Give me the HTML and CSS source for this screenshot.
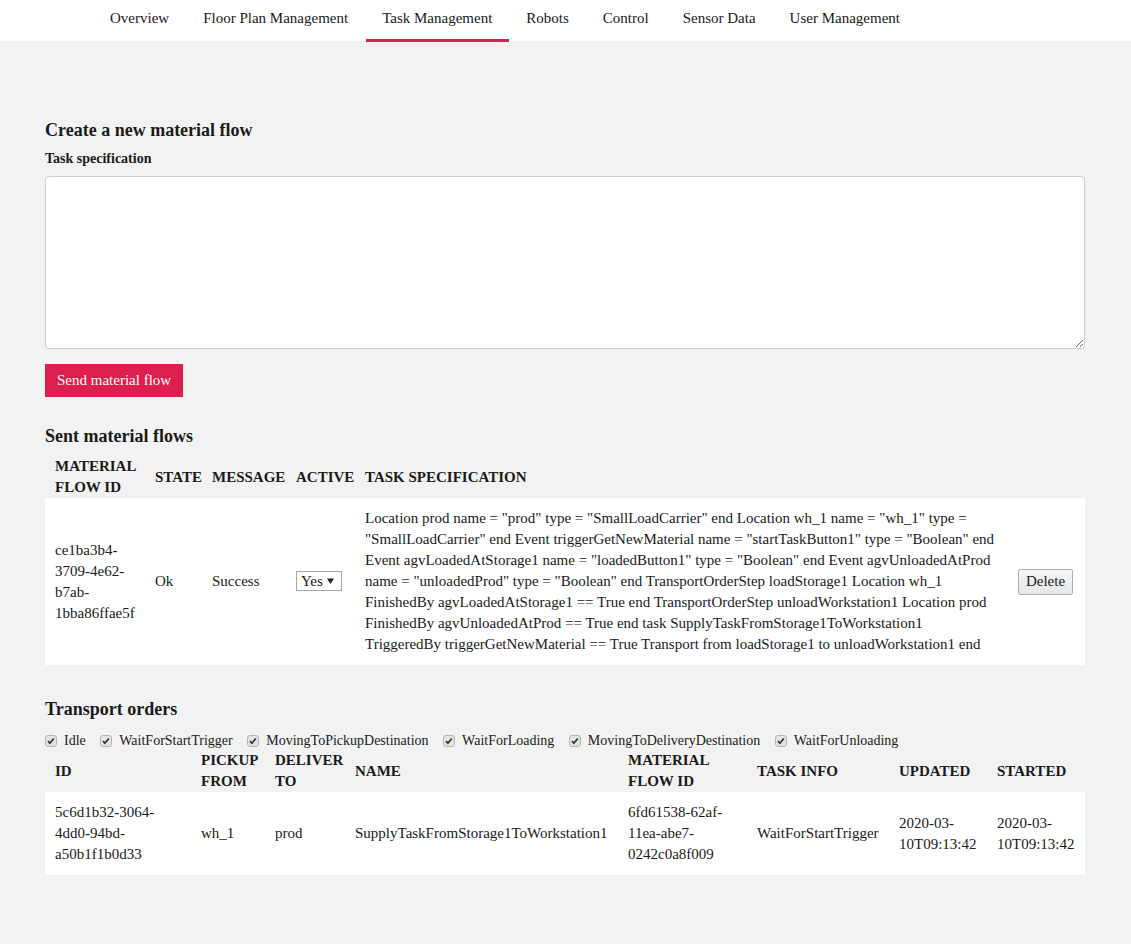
FILE: index.html
```html
<!DOCTYPE html>
<html lang="en">
<head>
<meta charset="utf-8">
<title>Task Management</title>
<link rel="stylesheet" href="styles.css">
</head>
<body>
<nav class="topnav">
  <a class="nav-item">Overview</a>
  <a class="nav-item">Floor Plan Management</a>
  <a class="nav-item active">Task Management</a>
  <a class="nav-item">Robots</a>
  <a class="nav-item">Control</a>
  <a class="nav-item">Sensor Data</a>
  <a class="nav-item">User Management</a>
</nav>
<main class="content">
  <h2 class="section-title first">Create a new material flow</h2>
  <label class="field-label" for="spec">Task specification</label>
  <textarea id="spec" class="spec-input"></textarea>
  <button class="primary-btn">Send material flow</button>

  <h2 class="section-title sent">Sent material flows</h2>
  <table class="data-table flows">
    <colgroup>
      <col class="f-id"><col class="f-state"><col class="f-msg"><col class="f-active"><col class="f-spec"><col class="f-del">
    </colgroup>
    <thead>
      <tr>
        <th>Material flow ID</th>
        <th>State</th>
        <th>Message</th>
        <th>Active</th>
        <th>Task specification</th>
        <th></th>
      </tr>
    </thead>
    <tbody>
      <tr>
        <td>ce1ba3b4-3709-4e62-b7ab-1bba86ffae5f</td>
        <td>Ok</td>
        <td>Success</td>
        <td><select class="yes-select"><option>Yes</option><option>No</option></select></td>
        <td>Location prod name = "prod" type = "SmallLoadCarrier" end Location wh_1 name = "wh_1" type = "SmallLoadCarrier" end Event triggerGetNewMaterial name = "startTaskButton1" type = "Boolean" end Event agvLoadedAtStorage1 name = "loadedButton1" type = "Boolean" end Event agvUnloadedAtProd name = "unloadedProd" type = "Boolean" end TransportOrderStep loadStorage1 Location wh_1 FinishedBy agvLoadedAtStorage1 == True end TransportOrderStep unloadWorkstation1 Location prod FinishedBy agvUnloadedAtProd == True end task SupplyTaskFromStorage1ToWorkstation1 TriggeredBy triggerGetNewMaterial == True Transport from loadStorage1 to unloadWorkstation1 end</td>
        <td><button class="del-btn">Delete</button></td>
      </tr>
    </tbody>
  </table>

  <h2 class="section-title transport">Transport orders</h2>
  <div class="filters">
    <label class="filter"><input type="checkbox" class="chk" checked>Idle</label>
    <label class="filter"><input type="checkbox" class="chk" checked>WaitForStartTrigger</label>
    <label class="filter"><input type="checkbox" class="chk" checked>MovingToPickupDestination</label>
    <label class="filter"><input type="checkbox" class="chk" checked>WaitForLoading</label>
    <label class="filter"><input type="checkbox" class="chk" checked>MovingToDeliveryDestination</label>
    <label class="filter"><input type="checkbox" class="chk" checked>WaitForUnloading</label>
  </div>
  <table class="data-table orders">
    <colgroup>
      <col class="o-id"><col class="o-pick"><col class="o-del"><col class="o-name"><col class="o-mf"><col class="o-info"><col class="o-upd"><col class="o-start">
    </colgroup>
    <thead>
      <tr>
        <th>ID</th>
        <th>Pickup from</th>
        <th>Deliver to</th>
        <th>Name</th>
        <th>Material flow ID</th>
        <th>Task info</th>
        <th>Updated</th>
        <th>Started</th>
      </tr>
    </thead>
    <tbody>
      <tr>
        <td>5c6d1b32-3064-4dd0-94bd-a50b1f1b0d33</td>
        <td>wh_1</td>
        <td>prod</td>
        <td>SupplyTaskFromStorage1ToWorkstation1</td>
        <td>6fd61538-62af-11ea-abe7-0242c0a8f009</td>
        <td>WaitForStartTrigger</td>
        <td>2020-03-10T09:13:42</td>
        <td>2020-03-10T09:13:42</td>
      </tr>
    </tbody>
  </table>
</main>
</body>
</html>
```

FILE: styles.css
```css
* { box-sizing: border-box; }

html, body {
  margin: 0;
  padding: 0;
  background: #f2f2f2;
  color: #1a1a1a;
  font-family: "Liberation Serif", "Times New Roman", serif;
  font-size: 15px;
}

.topnav {
  background: #ffffff;
  height: 41px;
  display: flex;
  padding-left: 94px;
}

.nav-item {
  display: block;
  padding: 0 17px 0 16px;
  margin-right: 1px;
  height: 42px;
  line-height: 37px;
  font-size: 15px;
  color: #1a1a1a;
  border-bottom: 3px solid transparent;
  cursor: pointer;
}

.nav-item.active {
  border-bottom-color: #dc1f4e;
}

.content {
  padding: 0 46px 60px 45px;
}

.section-title {
  margin: 0;
  font-size: 18px;
  line-height: 22px;
  font-weight: bold;
}

.section-title.first { padding-top: 78px; }
.section-title.sent { margin-top: 28px; }
.section-title.transport { margin-top: 33px; }

.field-label {
  display: block;
  margin-top: 9px;
  font-size: 14px;
  line-height: 18px;
  font-weight: bold;
}

.spec-input {
  display: block;
  width: 100%;
  height: 173px;
  margin-top: 8px;
  background: #ffffff;
  border: 1px solid #cccccc;
  border-radius: 4px;
  font-family: inherit;
  font-size: 15px;
  padding: 6px 8px;
}

.primary-btn {
  display: block;
  margin-top: 15px;
  height: 33px;
  padding: 0 12px;
  background: #dc1f4e;
  color: #ffffff;
  border: none;
  border-radius: 0;
  font-family: inherit;
  font-size: 15px;
  cursor: pointer;
}

.data-table {
  width: 100%;
  border-collapse: collapse;
  table-layout: fixed;
}

.data-table th {
  text-align: left;
  text-transform: uppercase;
  font-size: 15px;
  font-weight: bold;
  line-height: 21px;
  padding: 0 10px;
  vertical-align: middle;
}

.data-table td {
  background: #ffffff;
  font-size: 15px;
  line-height: 21px;
  padding: 10px;
  vertical-align: middle;
}

.flows { margin-top: 9px; }

.f-id { width: 100px; }
.f-state { width: 57px; }
.f-msg { width: 84px; }
.f-active { width: 69px; }
.f-spec { width: 654px; }
.f-del { width: 76px; }

.o-id { width: 146px; }
.o-pick { width: 74px; }
.o-del { width: 80px; }
.o-name { width: 273px; }
.o-mf { width: 129px; }
.o-info { width: 142px; }
.o-upd { width: 98px; }
.o-start { width: 98px; }

.yes-select {
  -webkit-appearance: none;
  appearance: none;
  width: 46px;
  height: 20px;
  padding: 0 0 0 4px;
  border: 1px solid #a6a6a6;
  border-radius: 0;
  background: #ffffff url("data:image/svg+xml;utf8,<svg xmlns='http://www.w3.org/2000/svg' width='7' height='6'><path d='M0 0.5h7L3.5 6z' fill='%23222'/></svg>") no-repeat right 7px center;
  font-family: inherit;
  font-size: 15px;
  line-height: 18px;
  color: #1a1a1a;
}

.del-btn {
  height: 26px;
  width: 55px;
  padding: 0;
  margin-left: -1px;
  background: linear-gradient(#f6f6f6, #e6e6e6);
  border: 1px solid #acacac;
  border-radius: 2px;
  font-family: inherit;
  font-size: 15px;
  color: #1a1a1a;
}

.filters {
  display: flex;
  gap: 14.5px;
  margin-top: 11px;
  height: 19px;
  align-items: center;
}

.filter {
  display: flex;
  align-items: center;
  font-size: 14px;
  line-height: 19px;
}

.chk {
  -webkit-appearance: none;
  appearance: none;
  width: 12px;
  height: 12px;
  margin: 0 7px 0 0;
  border: 1px solid #b5b5b5;
  border-radius: 3px;
  background: #e3e3e3 url("data:image/svg+xml;utf8,<svg xmlns='http://www.w3.org/2000/svg' width='10' height='10'><path d='M2 5.2l1.9 2 3.9-4.7' fill='none' stroke='%23333' stroke-width='1.7'/></svg>") no-repeat center;
}

.orders { margin-top: 0; }
```
